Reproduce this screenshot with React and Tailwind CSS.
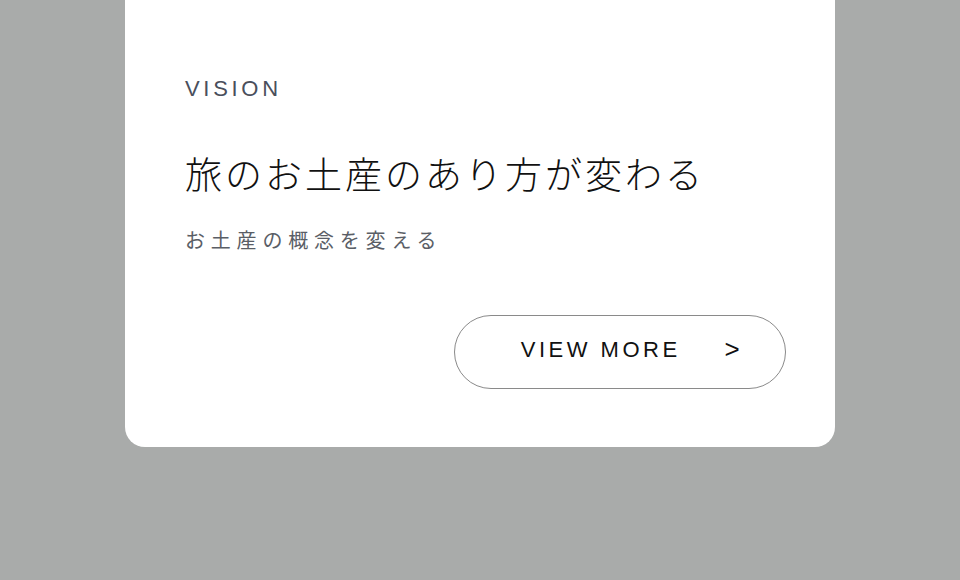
export default function App() {
  return (
    <div className="w-[960px] h-[580px] bg-[#a9abaa] overflow-hidden" style={{ fontFamily: '"Noto Sans CJK JP", "Noto Sans", sans-serif' }}>
      <div className="ml-[125px] w-[710px] h-[447px] bg-white rounded-b-[20px] pl-[60px] pr-[49px] pt-[74px] flex flex-col">
        <div className="text-[22px] leading-[30px] tracking-[3.7px] text-[#4a4f5c] font-['Liberation_Sans',sans-serif]">VISION</div>
        <h1 className="mt-[44px] text-[37px] leading-[50px] tracking-[3px] font-light text-[#111]">旅のお土産のあり方が変わる</h1>
        <p className="mt-[28px] text-[20px] leading-[28px] tracking-[5.8px] text-[#5a5e66] font-normal">お土産の概念を変える</p>
        <div className="mt-[61px] flex justify-end">
          <button className="w-[332px] h-[74px] rounded-full border border-[#8a8a8a] flex items-center justify-center pl-[24px] pb-[5px] text-[22px] tracking-[3.5px] text-[#111] font-['Liberation_Sans',sans-serif]">
            <span>VIEW MORE</span>
            <span className="ml-[44px] text-[26px] font-light">&gt;</span>
          </button>
        </div>
      </div>
    </div>
  );
}
